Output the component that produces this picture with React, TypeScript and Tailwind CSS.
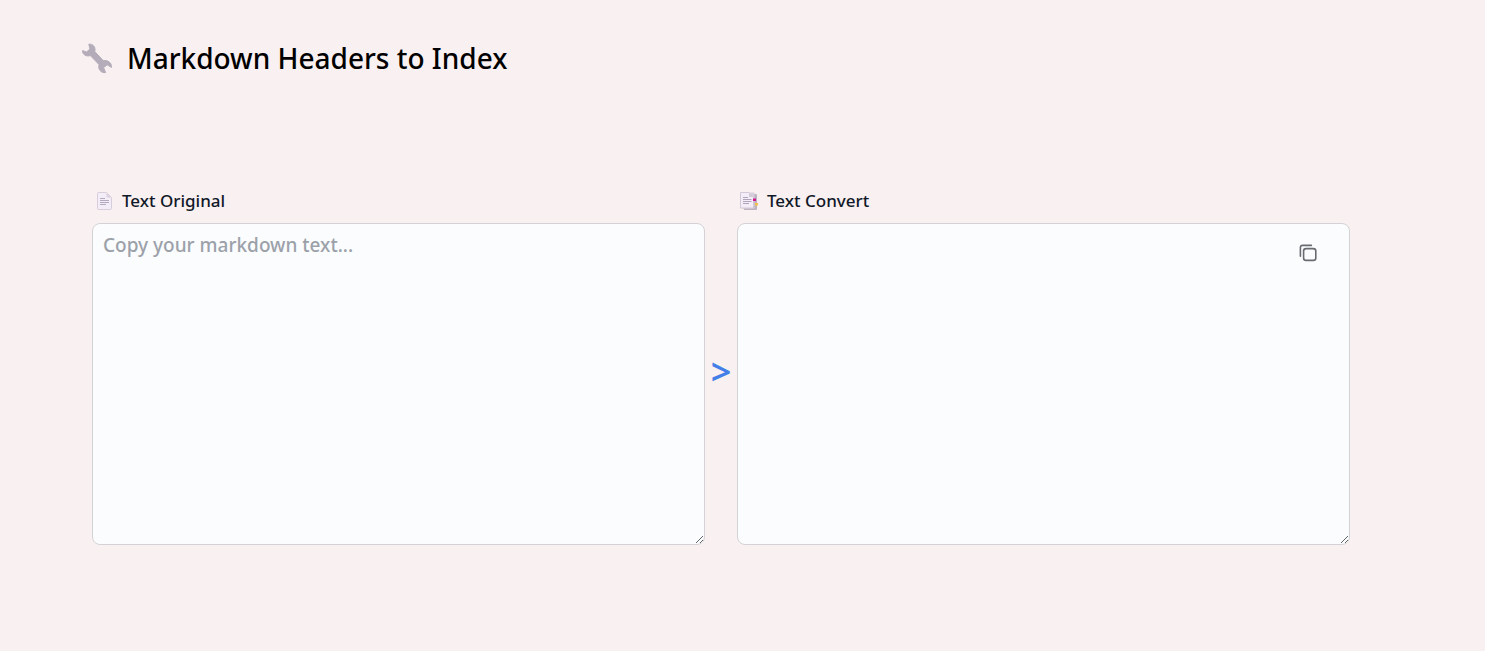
import { useState } from "react";

function WrenchIcon() {
  return (
    <svg viewBox="0 0 32 32" className="h-8 w-8 shrink-0" aria-hidden="true">
      <path
        d="M1.6 8.6 L5.4 10 L9 7.2 L7.8 2.2 C11.9 1.6 14.9 5 13.8 9.6 L22.2 18.6 C26.8 17.8 31 20.8 30.4 25.4 L26.2 22.8 L22.6 25.6 L24.6 30.6 C20 31.2 16.8 27.4 18 22.6 L9.4 13.6 C5.4 14.8 1.2 12.6 1.6 8.6 Z"
        fill="#b4acb9"
        stroke="#b4acb9"
        strokeLinejoin="round"
      />
    </svg>
  );
}

function PageIcon() {
  return (
    <svg viewBox="0 0 18 20" className="h-5 w-[18px] shrink-0" aria-hidden="true">
      <path d="M2.5 1.5 H10.5 L15.5 6.5 V17.5 Q15.5 18.5 14.5 18.5 H2.5 Q1.5 18.5 1.5 17.5 V2.5 Q1.5 1.5 2.5 1.5 Z" fill="#f3edf7" stroke="#d8cddb" />
      <path d="M10.5 1.5 V5.5 Q10.5 6.5 11.5 6.5 H15.5 Z" fill="#ddd1e0" />
      <path d="M4 7.5 H9 M4 9.5 H13 M4 11.5 H13 M4 13.5 H10" stroke="#b5a9c2" />
    </svg>
  );
}

function BookmarkTabsIcon() {
  return (
    <svg viewBox="0 0 18 20" className="h-5 w-[18px] shrink-0 overflow-visible" aria-hidden="true">
      <path d="M2 3 H15 Q16 3 16 4 V18 Q16 19 15 19 H3 Z" fill="#bdb4bf" />
      <path d="M1 1.5 H13.5 V17.5 H1 Z" fill="#d9cfdd" />
      <path d="M-0.5 1.5 H8 L12.5 6 V17 H-0.5 Z" fill="#f3edf7" stroke="#d3c9d6" />
      <path d="M8 1.5 V6 H12.5 Z" fill="#d5cad9" />
      <path d="M2 6.5 H7 M2 8.5 H10.5 M2 10.5 H10.5 M2 12.5 H8" stroke="#b0a5bc" />
      <rect x="12" y="7.5" width="3" height="2.5" fill="#d4148c" />
      <rect x="14" y="12" width="3" height="2.5" fill="#f6c14b" />
    </svg>
  );
}

function CopyIcon() {
  return (
    <svg viewBox="0 0 20 20" className="h-5 w-5" fill="none" stroke="#696b70" strokeWidth="1.6" strokeLinecap="round" strokeLinejoin="round" aria-hidden="true">
      <rect x="5.6" y="5.6" width="12.2" height="11.8" rx="2.5" />
      <path d="M2.4 13.2 V4.6 Q2.4 2.4 4.6 2.4 H13.4" />
    </svg>
  );
}

function buildIndex(markdown: string) {
  return markdown
    .split("\n")
    .map((line) => /^(#{1,6})\s+(.+)$/.exec(line))
    .filter((match) => match !== null)
    .map(([, hashes, title]) => {
      const slug = title.trim().toLowerCase().replace(/[^\w\s-]/g, "").replace(/\s+/g, "-");
      return `${"  ".repeat(hashes.length - 1)}- [${title.trim()}](#${slug})`;
    })
    .join("\n");
}

const labelClass = "flex h-7 items-center gap-2 pl-1 text-[17px] font-medium text-gray-900";
const areaClass =
  "block h-[322px] w-full resize rounded-lg border border-[#d3d3d6] bg-[#fafcfe] px-2.5 py-[7px] text-[19px] leading-7 font-medium text-gray-900 outline-none placeholder:text-[#9ca1a9] focus:border-blue-500";

export default function App() {
  const [source, setSource] = useState("");
  const result = buildIndex(source);

  return (
    <div className="min-h-screen bg-[#f9f0f1] font-['Noto_Sans','Open_Sans',sans-serif]">
      <header className="flex items-center gap-3.5 pt-10 pl-[81px]">
        <WrenchIcon />
        <h1 className="text-[28px] leading-9 font-medium text-black">Markdown Headers to Index</h1>
      </header>
      <main className="flex pt-[111px] pr-[135px] pb-10 pl-[92px]">
        <section className="min-w-0 flex-1">
          <label htmlFor="source" className={labelClass}>
            <PageIcon />
            Text Original
          </label>
          <div className="pt-2">
            <textarea
              id="source"
              className={areaClass}
              placeholder="Copy your markdown text..."
              value={source}
              onChange={(event) => setSource(event.target.value)}
            />
          </div>
        </section>
        <div className="flex w-8 shrink-0 items-center justify-center pt-3 text-4xl font-semibold text-[#447fe8]" aria-hidden="true">
          &gt;
        </div>
        <section className="min-w-0 flex-1">
          <label htmlFor="result" className={labelClass}>
            <BookmarkTabsIcon />
            Text Convert
          </label>
          <div className="relative pt-2">
            <textarea id="result" className={areaClass} value={result} readOnly />
            <button
              type="button"
              aria-label="Copy"
              className="absolute top-5 right-6 flex h-9 w-9 items-center justify-center rounded-lg hover:bg-gray-100"
              onClick={() => navigator.clipboard.writeText(result)}
            >
              <CopyIcon />
            </button>
          </div>
        </section>
      </main>
    </div>
  );
}
